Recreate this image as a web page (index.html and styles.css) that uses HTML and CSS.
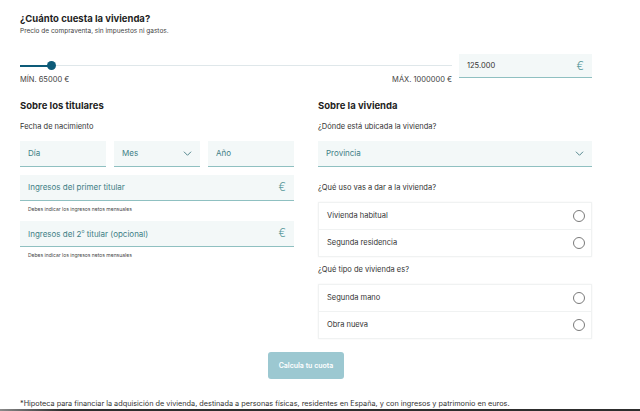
FILE: index.html
```html
<!DOCTYPE html>
<html lang="es">
<head>
  <meta charset="UTF-8" />
  <meta name="viewport" content="width=device-width, initial-scale=1.0" />
  <title>Simulador de hipoteca</title>
  <link rel="stylesheet" href="styles.css">
</head>
<body>
  <div class="simulador">
    <h1>¿Cuánto cuesta la vivienda?</h1>
    <p class="sub">Precio de compraventa, sin impuestos ni gastos.</p>

    <div class="precio">
      <div class="slider">
        <div class="track">
          <div class="fill"></div>
          <div class="thumb"></div>
        </div>
        <div class="limits">
          <span>MÍN. 65000 €</span>
          <span>MÁX. 1000000 €</span>
        </div>
      </div>
      <div class="field precio-input">
        <span class="value">125.000</span>
        <span class="euro">€</span>
      </div>
    </div>

    <div class="cols">
      <div class="col">
        <h2>Sobre los titulares</h2>
        <div class="label">Fecha de nacimiento</div>
        <div class="fecha">
          <div class="field"><span>Día</span></div>
          <div class="field">
            <span>Mes</span>
            <svg class="chev" viewBox="0 0 12 7"><polyline points="1,1 6,6 11,1" /></svg>
          </div>
          <div class="field"><span>Año</span></div>
        </div>
        <div class="field ingresos">
          <span>Ingresos del primer titular</span>
          <span class="euro">€</span>
        </div>
        <div class="help">Debes indicar los ingresos netos mensuales</div>
        <div class="field ingresos">
          <span>Ingresos del 2<sup>o</sup> titular (opcional)</span>
          <span class="euro">€</span>
        </div>
        <div class="help">Debes indicar los ingresos netos mensuales</div>
      </div>

      <div class="col">
        <h2>Sobre la vivienda</h2>
        <div class="label">¿Dónde está ubicada la vivienda?</div>
        <div class="field provincia">
          <span>Provincia</span>
          <svg class="chev" viewBox="0 0 12 7"><polyline points="1,1 6,6 11,1" /></svg>
        </div>

        <div class="label q">¿Qué uso vas a dar a la vivienda?</div>
        <div class="options">
          <div class="option"><span>Vivienda habitual</span><i class="radio"></i></div>
          <div class="option"><span>Segunda residencia</span><i class="radio"></i></div>
        </div>

        <div class="label q2">¿Qué tipo de vivienda es?</div>
        <div class="options">
          <div class="option"><span>Segunda mano</span><i class="radio"></i></div>
          <div class="option"><span>Obra nueva</span><i class="radio"></i></div>
        </div>
      </div>
    </div>

    <div class="actions">
      <button class="calcular" disabled>Calcula tu cuota</button>
    </div>

    <p class="nota">*Hipoteca para financiar la adquisición de vivienda, destinada a personas físicas, residentes en España, y con ingresos y patrimonio en euros.</p>
  </div>
  <div class="bottom-bar"></div>
</body>
</html>
```

FILE: styles.css
```css
* {
  box-sizing: border-box;
}

body {
  margin: 0;
  height: 411px;
  overflow: hidden;
  position: relative;
  background: #ffffff;
  font-family: Inter, "Noto Sans", sans-serif;
  color: #2b2b2b;
}

.simulador {
  width: 592px;
  padding: 13px 0 0 20px;
}

h1 {
  margin: 0;
  font-size: 9.5px;
  font-weight: 700;
  line-height: 12px;
  color: #1f1f1f;
}

.sub {
  margin: 2px 0 0;
  font-size: 6.5px;
  line-height: 9px;
  color: #444;
}

.precio {
  display: flex;
  gap: 7px;
  margin-top: 18px;
}

.slider {
  width: 432px;
  padding-top: 11px;
}

.track {
  position: relative;
  height: 1px;
  background: #dfe7ea;
}

.fill {
  width: 31px;
  height: 2px;
  margin-top: -0.5px;
  background: #0d5b78;
}

.thumb {
  position: absolute;
  left: 27px;
  top: -4px;
  width: 9px;
  height: 9px;
  border-radius: 50%;
  background: #0d5b78;
}

.limits {
  display: flex;
  justify-content: space-between;
  margin-top: 9px;
  font-size: 7.5px;
  color: #444;
}

.field {
  display: flex;
  align-items: center;
  justify-content: space-between;
  height: 26px;
  padding: 0 8px;
  background: #f3f8f8;
  border-bottom: 1px solid #8fc0c1;
  font-size: 8px;
  color: #3f7f86;
}

.precio-input {
  width: 133px;
  height: 24px;
  color: #333;
  font-size: 7.5px;
}

.euro {
  font-size: 11px;
  font-weight: 300;
  color: #5b9a9c;
}

.cols {
  display: flex;
  gap: 24px;
  margin-top: 16px;
}

.col {
  width: 274px;
}

h2 {
  margin: 0;
  font-size: 9.5px;
  font-weight: 700;
  line-height: 12px;
  color: #1f1f1f;
}

.label {
  margin-top: 10px;
  font-size: 7.5px;
  line-height: 10px;
  color: #333;
}

.label.q {
  margin-top: 16px;
}

.label.q2 {
  margin-top: 8px;
}

.fecha {
  display: flex;
  gap: 8px;
  margin-top: 9px;
}

.fecha .field {
  flex: 1;
}

.chev {
  width: 9px;
  height: 5px;
  fill: none;
  stroke: #4a7f87;
  stroke-width: 1.3;
}

.ingresos {
  margin-top: 8px;
}

.ingresos sup {
  font-size: 5px;
}

.help {
  margin-top: 4px;
  padding-left: 8px;
  font-size: 5px;
  line-height: 8px;
  color: #444;
}

.provincia {
  margin-top: 9px;
}

.options {
  margin-top: 9px;
  border: 1px solid #f0f2f2;
  box-shadow: 0 0 2px rgba(0, 0, 0, 0.05);
}

.option {
  display: flex;
  align-items: center;
  justify-content: space-between;
  height: 26.5px;
  padding: 0 6px 0 8px;
  font-size: 7.5px;
  color: #333;
}

.option + .option {
  border-top: 1px solid #f0f2f2;
}

.radio {
  width: 12px;
  height: 12px;
  border: 1px solid #7a7a7a;
  border-radius: 50%;
}

.actions {
  display: flex;
  justify-content: center;
  margin-top: 13px;
}

.calcular {
  width: 76px;
  height: 27px;
  border: none;
  border-radius: 3px;
  background: #9cc8d1;
  color: #ffffff;
  font-family: inherit;
  font-size: 7px;
  font-weight: 600;
}

.nota {
  margin: 20px 0 0;
  font-size: 7.3px;
  line-height: 9px;
  color: #333;
}

.bottom-bar {
  position: absolute;
  left: 0;
  right: 0;
  bottom: 0;
  height: 2px;
  background: linear-gradient(90deg, #8a8a8a, #2d2d2d 10%, #2d2d2d);
}
```
